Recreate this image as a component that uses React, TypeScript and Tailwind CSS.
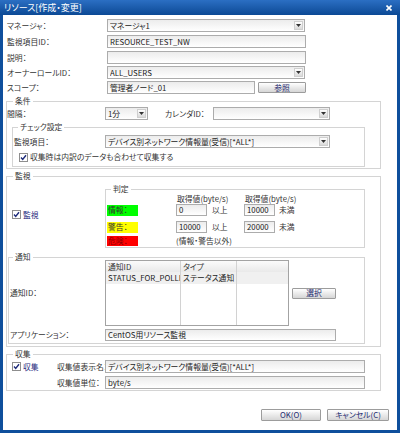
import React from 'react';

const base = "font-['Noto_Sans_CJK_JP',sans-serif] [font-feature-settings:'palt'] text-[7.8px] text-[#333] whitespace-nowrap";

function TextBox({ w, value = '', h = 'h-[13px]' }: { w: string; value?: string; h?: string }) {
  return (
    <div className={`${w} ${h} shrink-0 border border-[#acacac] bg-linear-to-b from-[#ececec] to-white flex items-center px-[2px] leading-[10px] text-[#222] overflow-hidden`}>
      {value}
    </div>
  );
}

function Select({ w, value = '' }: { w: string; value?: string }) {
  return (
    <div className={`${w} h-[13px] shrink-0 border border-[#acacac] bg-linear-to-b from-[#ececec] to-white flex items-center pl-[2px] pr-[1px] leading-[10px] text-[#222]`}>
      <span className="flex-1 min-w-0 overflow-hidden">{value}</span>
      <span className="w-[9px] h-[9px] shrink-0 border border-[#cfcfcf] bg-linear-to-b from-white to-[#d9d9d9] flex items-center justify-center">
        <svg width="5" height="3" viewBox="0 0 5 3"><path d="M0 0h5L2.5 3z" fill="#333" /></svg>
      </span>
    </div>
  );
}

function Button({ w, label, h = 'h-[12px]' }: { w: string; label: string; h?: string }) {
  return (
    <div className={`${w} ${h} shrink-0 border border-[#9c9c9c] rounded-[1px] bg-linear-to-b from-white to-[#d6d6d6] flex items-center justify-center leading-none text-[#22286e]`}>
      {label}
    </div>
  );
}

function Check() {
  return (
    <span className="w-[9px] h-[9px] shrink-0 border border-[#8e8e8e] bg-white flex items-center justify-center">
      <svg width="7" height="7" viewBox="0 0 7 7">
        <path d="M1 3.6l1.7 1.8L6 1.2" stroke="#1d2a7a" strokeWidth="1.4" fill="none" />
      </svg>
    </span>
  );
}

function Group({
  title,
  className,
  legend,
  children,
}: {
  title: string;
  className: string;
  legend: string;
  children: React.ReactNode;
}) {
  return (
    <fieldset className={`border border-[#d4d4d4] ${className}`}>
      <legend className={`px-[2px] text-[#333] ${legend}`}>{title}</legend>
      {children}
    </fieldset>
  );
}

export default function App() {
  return (
    <div className={`w-[400px] h-[433px] bg-[#0f4f9c] flex flex-col ${base}`}>
      <div className="h-[15px] shrink-0 bg-linear-to-b from-[#2b6fc3] to-[#0b4995] flex items-center justify-between pl-[4px] pr-[8px]">
        <span className="text-white text-[9px] leading-none">リソース[作成・変更]</span>
        <svg width="6" height="6" viewBox="0 0 6 6">
          <path d="M0.5 0.5l5 5M5.5 0.5l-5 5" stroke="white" strokeWidth="1.6" />
        </svg>
      </div>

      <div className="flex-1 mx-[3px] mb-[3px] bg-white flex flex-col">
        <div className="mt-[4px] h-[13px] flex items-center">
          <span className="w-[104px] pl-[4px]">マネージャ：</span>
          <Select w="w-[198px]" value="マネージャ1" />
        </div>
        <div className="mt-[3px] h-[13px] flex items-center">
          <span className="w-[104px] pl-[4px]">監視項目ID：</span>
          <TextBox w="w-[199px]" value="RESOURCE_TEST_NW" />
        </div>
        <div className="mt-[3px] h-[13px] flex items-center">
          <span className="w-[104px] pl-[4px]">説明：</span>
          <TextBox w="w-[199px]" />
        </div>
        <div className="mt-[2px] h-[13px] flex items-center">
          <span className="w-[104px] pl-[4px]">オーナーロールID：</span>
          <Select w="w-[198px]" value="ALL_USERS" />
        </div>
        <div className="mt-[2px] h-[13px] flex items-center">
          <span className="w-[104px] pl-[4px]">スコープ：</span>
          <TextBox w="w-[148px]" value="管理者ノード_01" />
          <div className="ml-[3px]">
            <Button w="w-[48px]" h="h-[11px]" label="参照" />
          </div>
        </div>

        {/* 条件 */}
        <Group title="条件" className="mt-[2px] ml-[3px] w-[375px] pb-[1px]" legend="ml-[6px] leading-[10px]">
          <div className="mt-[1px] h-[13px] flex items-center">
            <span className="w-[98px]">間隔：</span>
            <Select w="w-[43px]" value="1分" />
            <span className="ml-[17px] w-[48px]">カレンダID：</span>
            <Select w="w-[117px]" />
          </div>
          <Group title="チェック設定" className="mt-[2px] ml-[5px] w-[353px] pb-[4px]" legend="ml-[5px] leading-[10px]">
            <div className="mt-[3px] h-[13px] flex items-center">
              <span className="w-[92px] pl-[1px]">監視項目：</span>
              <Select w="w-[225px]" value="デバイス別ネットワーク情報量(受信)[*ALL*]" />
            </div>
            <div className="mt-[4px] h-[10px] ml-[6px] flex items-center gap-[2px]">
              <Check />
              <span className="leading-none">収集時は内訳のデータも合わせて収集する</span>
            </div>
          </Group>
        </Group>

        {/* 監視 */}
        <Group title="監視" className="mt-[2px] ml-[3px] w-[375px] pb-[2px]" legend="ml-[6px] leading-[10px]">
          <div className="flex">
            <div className="w-[98px] pl-[5px] flex items-center gap-[2px]">
              <Check />
              <span className="leading-none text-[#1f2a80]">監視</span>
            </div>
            <Group title="判定" className="mt-[3px] w-[260px] pb-[1px]" legend="ml-[5px] leading-[10px]">
              <div className="h-[10px] flex items-center leading-none">
                <span className="w-[70px]" />
                <span className="w-[68px] pl-[1px]">取得値(byte/s)</span>
                <span className="pl-[1px]">取得値(byte/s)</span>
              </div>
              <div className="h-[12px] flex items-center leading-none">
                <div className="w-[70px] pl-[1px]">
                  <div className="w-[31px] h-[11px] bg-[#00ff00] flex items-center pl-[1px]">情報：</div>
                </div>
                <div className="w-[68px] flex items-center">
                  <TextBox w="w-[31px]" h="h-[12px]" value="0" />
                  <span className="ml-[5px]">以上</span>
                </div>
                <TextBox w="w-[31px]" h="h-[12px]" value="10000" />
                <span className="ml-[4px]">未満</span>
              </div>
              <div className="mt-[5px] h-[12px] flex items-center leading-none">
                <div className="w-[70px] pl-[1px]">
                  <div className="w-[31px] h-[11px] bg-[#ffff00] flex items-center pl-[1px]">警告：</div>
                </div>
                <div className="w-[68px] flex items-center">
                  <TextBox w="w-[31px]" h="h-[12px]" value="10000" />
                  <span className="ml-[5px]">以上</span>
                </div>
                <TextBox w="w-[31px]" h="h-[12px]" value="20000" />
                <span className="ml-[4px]">未満</span>
              </div>
              <div className="mt-[3px] h-[10px] flex items-center leading-none">
                <div className="w-[70px] pl-[1px]">
                  <div className="w-[31px] h-[10px] bg-[#ff0000] text-[#8a0000] flex items-center pl-[1px]">危険：</div>
                </div>
                <span>(情報・警告以外)</span>
              </div>
            </Group>
          </div>

          {/* 通知 */}
          <Group title="通知" className="mt-[6px] ml-[1px] w-[357px] pb-[2px]" legend="ml-[4px] leading-[6px]">
            <div className="flex items-center">
              <span className="w-[96px] pl-[1px]">通知ID：</span>
              <div className="w-[184px] h-[66px] border border-[#a3a3a3] bg-white flex leading-[10px] overflow-hidden">
                <div className="w-[75px] border-r border-[#d2d2d2] flex flex-col overflow-hidden">
                  <div className="h-[11px] bg-linear-to-b from-[#fbfbfb] to-[#e9e9e9] flex items-center pl-[2px]">通知ID</div>
                  <div className="h-[12px] bg-[#f0f0f0] flex items-center pl-[2px] text-[#222]">STATUS_FOR_POLLING</div>
                </div>
                <div className="w-[56px] border-r border-[#d2d2d2] flex flex-col overflow-hidden">
                  <div className="h-[11px] bg-linear-to-b from-[#fbfbfb] to-[#e9e9e9] flex items-center pl-[2px]">タイプ</div>
                  <div className="h-[12px] bg-[#f0f0f0] flex items-center pl-[2px] text-[#222]">ステータス通知</div>
                </div>
                <div className="flex-1 flex flex-col">
                  <div className="h-[11px] bg-linear-to-b from-[#fbfbfb] to-[#e9e9e9]" />
                  <div className="h-[12px] bg-[#f0f0f0]" />
                </div>
              </div>
              <div className="ml-[3px]">
                <Button w="w-[44px]" h="h-[11px]" label="選択" />
              </div>
            </div>
            <div className="mt-[3px] h-[12px] flex items-center">
              <span className="w-[96px] pl-[1px]">アプリケーション：</span>
              <TextBox w="w-[231px]" h="h-[12px]" value="CentOS用リソース監視" />
            </div>
          </Group>
        </Group>

        {/* 収集 */}
        <Group title="収集" className="mt-[2px] ml-[3px] w-[375px] pb-[1px]" legend="ml-[6px] leading-[10px]">
          <div className="mt-[1px] h-[13px] flex items-center">
            <div className="w-[50px] pl-[5px] flex items-center gap-[2px]">
              <Check />
              <span className="leading-none text-[#1f2a80]">収集</span>
            </div>
            <span className="w-[48px]">収集値表示名：</span>
            <TextBox w="w-[260px]" value="デバイス別ネットワーク情報量(受信)[*ALL*]" />
          </div>
          <div className="mt-[3px] h-[13px] flex items-center">
            <span className="w-[50px]" />
            <span className="w-[48px]">収集値単位：</span>
            <TextBox w="w-[260px]" value="byte/s" />
          </div>
        </Group>

        <div className="mt-[18px] flex justify-end gap-[6px] pr-[8px]">
          <Button w="w-[60px]" label="OK(O)" />
          <Button w="w-[62px]" label="キャンセル(C)" />
        </div>
      </div>
    </div>
  );
}
